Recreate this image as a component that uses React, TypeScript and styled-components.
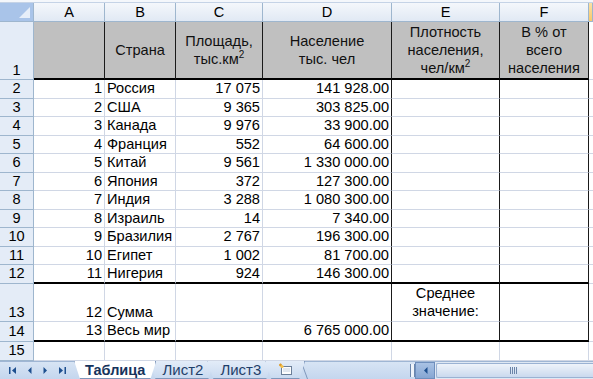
import React from 'react';
import styled, { createGlobalStyle, css } from 'styled-components';

const GlobalStyle = createGlobalStyle`
  html, body {
    margin: 0;
    padding: 0;
    background: #ffffff;
  }
  body {
    width: 593px;
    height: 379px;
    overflow: hidden;
    font-family: "Liberation Sans", Arial, sans-serif;
  }
`;

const GRID = '#d0d7e5';
const HEAD_LINE = '#9eb6ce';

const Window = styled.div`
  width: 593px;
  height: 379px;
  display: flex;
  flex-direction: column;
  overflow: hidden;
`;

const TopStrip = styled.div`
  height: 2px;
  background: #f4f7fb;
  border-bottom: 1px solid #c5d3e6;
`;

const Sheet = styled.div`
  display: grid;
  grid-template-columns: 34px 71px 71px 87px 129px 108px 89px 4px;
  grid-template-rows: 19px 58px repeat(11, 18.5px) 38px 20px 19px;
  font-size: 14.6px;
  color: #000;
`;

const Corner = styled.div`
  position: relative;
  background: #a9c4e9;
  border-right: 1px solid ${HEAD_LINE};
  border-bottom: 1px solid ${HEAD_LINE};

  &::after {
    content: '';
    position: absolute;
    right: 3px;
    bottom: 3px;
    width: 0;
    height: 0;
    border-left: 11px solid transparent;
    border-bottom: 11px solid #e6eef9;
  }
`;

const ColHeader = styled.div<{ $active?: boolean }>`
  display: flex;
  align-items: center;
  justify-content: center;
  background: ${(p) =>
    p.$active
      ? 'linear-gradient(#fbe1a6, #f9c86a)'
      : 'linear-gradient(#f4f7fb, #e1e9f4)'};
  border-right: 1px solid ${HEAD_LINE};
  border-bottom: 1px solid ${HEAD_LINE};
  box-sizing: border-box;
  line-height: 1;
`;

const RowHeader = styled.div<{ $bottom?: boolean }>`
  display: flex;
  align-items: ${(p) => (p.$bottom ? 'flex-end' : 'center')};
  justify-content: center;
  background: #e4ecf7;
  border-right: 1px solid ${HEAD_LINE};
  border-bottom: 1px solid ${HEAD_LINE};
  box-sizing: border-box;
  padding-bottom: ${(p) => (p.$bottom ? '1px' : '0')};
  line-height: 1;
`;

type Align = 'left' | 'right' | 'center';

const Cell = styled.div<{
  $align?: Align;
  $valign?: 'center' | 'end';
  $head?: boolean;
  $dark?: boolean;
  $thick?: boolean;
  $wrap?: boolean;
}>`
  display: flex;
  box-sizing: border-box;
  overflow: hidden;
  white-space: ${(p) => (p.$wrap || p.$head ? 'normal' : 'nowrap')};
  line-height: ${(p) => (p.$wrap || p.$head ? 1.24 : 1.15)};
  padding: 0 2px;
  justify-content: ${(p) =>
    p.$align === 'right' ? 'flex-end' : p.$align === 'center' ? 'center' : 'flex-start'};
  align-items: ${(p) => (p.$valign === 'end' ? 'flex-end' : 'center')};
  text-align: ${(p) => p.$align ?? 'left'};
  background: ${(p) => (p.$head ? '#c0c0c0' : '#ffffff')};
  border-right: 1px solid ${(p) => (p.$dark ? '#1a1a1a' : GRID)};
  border-bottom: ${(p) => (p.$thick ? '2px solid #000' : `1px solid ${GRID}`)};
  ${(p) =>
    p.$head &&
    css`
      color: #111;
    `}
`;

const Sup = styled.sup`
  font-size: 10px;
  line-height: 0;
  vertical-align: 6px;
`;

/* ---- sheet tab bar ---- */

const TabBar = styled.div`
  flex: 1;
  display: flex;
  align-items: stretch;
  background: linear-gradient(#d7e4f4, #c4d6ee);
  border-top: 1px solid #9fb6d4;
`;

const Nav = styled.div`
  width: 72px;
  flex-shrink: 0;
  display: flex;
  align-items: center;
  justify-content: space-between;
  padding: 0 5px 0 8px;
  box-sizing: border-box;
`;

const Tabs = styled.div`
  display: flex;
  align-items: stretch;
  margin-top: -1px;
  margin-left: 4px;
`;

const Tab = styled.div<{ $active?: boolean }>`
  position: relative;
  display: flex;
  align-items: center;
  padding: ${(p) => (p.$active ? '0 9px' : '0 9px 0 11px')};
  margin-right: -3px;
  font-size: ${(p) => (p.$active ? '14.5px' : '15px')};
  font-weight: ${(p) => (p.$active ? 700 : 400)};
  color: ${(p) => (p.$active ? '#15335c' : '#1f3f6a')};
  z-index: ${(p) => (p.$active ? 2 : 1)};

  &::before {
    content: '';
    position: absolute;
    inset: 0 -2px 0 -2px;
    z-index: -1;
    background: ${(p) => (p.$active ? '#ffffff' : 'linear-gradient(#e3ecf8, #c9daf0)')};
    border: 1px solid #7e97bb;
    border-top: none;
    clip-path: polygon(0 0, 100% 0, calc(100% - 6px) 100%, 6px 100%);
  }
`;

const Slash = styled.span`
  width: 1px;
  align-self: stretch;
  background: #7e97bb;
  transform: skewX(20deg);
  margin: 0 4px;
`;

const TabText = styled.span`
  position: relative;
`;

const Spacer = styled.div`
  flex: 1;
`;

const Splitter = styled.div`
  width: 3px;
  flex-shrink: 0;
  margin: 2px 0;
  border-left: 1px solid #6a86ad;
  border-right: 1px solid #6a86ad;
  background: #eef3fa;
`;

const ScrollBtn = styled.div`
  width: 20px;
  flex-shrink: 0;
  display: flex;
  align-items: center;
  justify-content: center;
  background: linear-gradient(#a9c2e4, #86a6d3);
  border: 1px solid #6f8fbd;
  box-sizing: border-box;
`;

const Track = styled.div`
  width: 158px;
  flex-shrink: 0;
  display: flex;
  padding: 1px 0 1px 1px;
  box-sizing: border-box;
  background: #dfe8f4;
`;

const Thumb = styled.div`
  flex: 1;
  display: flex;
  align-items: center;
  justify-content: center;
  padding-right: 4px;
  background: linear-gradient(#eef3fa, #cad9ee);
  border: 1px solid #9ab2d3;
  border-right: none;
  border-radius: 2px 0 0 2px;
`;

const Grip = styled.span`
  width: 7px;
  height: 7px;
  background: repeating-linear-gradient(90deg, #6b84a8 0 1px, transparent 1px 2px);
`;

type RowData = [string, string, string, string];

const data: RowData[] = [
  ['1', 'Россия', '17 075', '141 928.00'],
  ['2', 'США', '9 365', '303 825.00'],
  ['3', 'Канада', '9 976', '33 900.00'],
  ['4', 'Франция', '552', '64 600.00'],
  ['5', 'Китай', '9 561', '1 330 000.00'],
  ['6', 'Япония', '372', '127 300.00'],
  ['7', 'Индия', '3 288', '1 080 300.00'],
  ['8', 'Израиль', '14', '7 340.00'],
  ['9', 'Бразилия', '2 767', '196 300.00'],
  ['10', 'Египет', '1 002', '81 700.00'],
  ['11', 'Нигерия', '924', '146 300.00'],
];

const Arrow = ({ dir, bar }: { dir: 'l' | 'r'; bar?: boolean }) => (
  <svg width="9" height="9" viewBox="0 0 9 9">
    {dir === 'l' ? (
      <>
        {bar && <rect x="1" y="1" width="1.5" height="7" fill="#1d4f8f" />}
        <polygon points={bar ? '8,1 8,8 4,4.5' : '6.5,1 6.5,8 3,4.5'} fill="#1d4f8f" />
      </>
    ) : (
      <>
        <polygon points={bar ? '1,1 1,8 5,4.5' : '2.5,1 2.5,8 6,4.5'} fill="#1d4f8f" />
        {bar && <rect x="6.5" y="1" width="1.5" height="7" fill="#1d4f8f" />}
      </>
    )}
  </svg>
);

const InsertIcon = () => (
  <svg width="16" height="13" viewBox="0 0 16 13">
    <rect x="3.5" y="3.5" width="10" height="8" fill="#fdfdfd" stroke="#6b7f99" />
    <path d="M5 6h7M5 8h7" stroke="#c6d2e2" />
    <path d="M1 2l3 0M2.5 0.5v3" stroke="#e09a26" strokeWidth="1.3" />
    <circle cx="4" cy="3.5" r="1.6" fill="#f6c14a" />
  </svg>
);

export default function App() {
  const cols = ['A', 'B', 'C', 'D', 'E', 'F'];

  return (
    <>
      <GlobalStyle />
      <Window>
        <TopStrip />
        <Sheet>
          <Corner />
          {cols.map((c) => (
            <ColHeader key={c}>{c}</ColHeader>
          ))}
          <ColHeader $active />

          <RowHeader $bottom>1</RowHeader>
          <Cell $head $dark $thick />
          <Cell $head $dark $thick $align="center">
            Страна
          </Cell>
          <Cell $head $dark $thick $align="center">
            <span>
              Площадь,
              <br />
              тыс.км<Sup>2</Sup>
            </span>
          </Cell>
          <Cell $head $dark $thick $align="center">
            <span>
              Население
              <br />
              тыс. чел
            </span>
          </Cell>
          <Cell $head $dark $thick $align="center">
            <span>
              Плотность
              <br />
              населения,
              <br />
              чел/км<Sup>2</Sup>
            </span>
          </Cell>
          <Cell $head $dark $thick $align="center">
            <span>
              В % от
              <br />
              всего
              <br />
              населения
            </span>
          </Cell>
          <Cell />

          {data.map((r, i) => {
            const last = i === data.length - 1;
            return (
              <React.Fragment key={r[0]}>
                <RowHeader>{i + 2}</RowHeader>
                <Cell $align="right" $thick={last}>
                  {r[0]}
                </Cell>
                <Cell $thick={last}>{r[1]}</Cell>
                <Cell $align="right" $thick={last}>
                  {r[2]}
                </Cell>
                <Cell $align="right" $dark $thick={last}>
                  {r[3]}
                </Cell>
                <Cell $dark $thick={last} />
                <Cell $dark $thick={last} />
                <Cell />
              </React.Fragment>
            );
          })}

          <RowHeader $bottom>13</RowHeader>
          <Cell $align="right" $valign="end">
            12
          </Cell>
          <Cell $valign="end">Сумма</Cell>
          <Cell />
          <Cell $dark />
          <Cell $dark $wrap $align="center">
            <span>
              Среднее
              <br />
              значение:
            </span>
          </Cell>
          <Cell $dark />
          <Cell />

          <RowHeader>14</RowHeader>
          <Cell $align="right" $thick>
            13
          </Cell>
          <Cell $thick>Весь мир</Cell>
          <Cell $thick />
          <Cell $align="right" $dark $thick>
            6 765 000.00
          </Cell>
          <Cell $dark $thick />
          <Cell $dark $thick />
          <Cell />

          <RowHeader>15</RowHeader>
          <Cell />
          <Cell />
          <Cell />
          <Cell />
          <Cell />
          <Cell />
          <Cell />
        </Sheet>

        <TabBar>
          <Nav>
            <Arrow dir="l" bar />
            <Arrow dir="l" />
            <Arrow dir="r" />
            <Arrow dir="r" bar />
          </Nav>
          <Tabs>
            <Tab $active>
              <TabText>Таблица</TabText>
            </Tab>
            <Tab>
              <TabText>Лист2</TabText>
            </Tab>
            <Tab>
              <TabText>Лист3</TabText>
            </Tab>
            <Tab>
              <InsertIcon />
            </Tab>
          </Tabs>
          <Slash />
          <Spacer />
          <Splitter />
          <ScrollBtn>
            <Arrow dir="l" />
          </ScrollBtn>
          <Track>
            <Thumb>
              <Grip />
            </Thumb>
          </Track>
        </TabBar>
      </Window>
    </>
  );
}
